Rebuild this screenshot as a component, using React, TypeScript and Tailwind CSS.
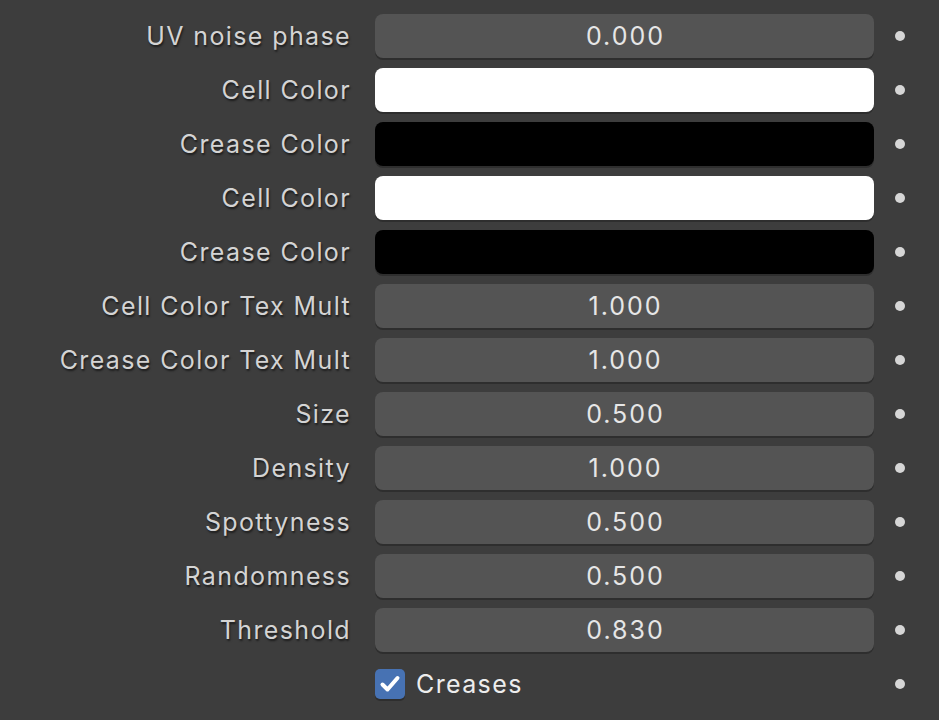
import React from "react";

type Row =
  | { label: string; kind: "num"; value: string }
  | { label: string; kind: "color"; color: string };

const rows: Row[] = [
  { label: "UV noise phase", kind: "num", value: "0.000" },
  { label: "Cell Color", kind: "color", color: "#ffffff" },
  { label: "Crease Color", kind: "color", color: "#000000" },
  { label: "Cell Color", kind: "color", color: "#ffffff" },
  { label: "Crease Color", kind: "color", color: "#000000" },
  { label: "Cell Color Tex Mult", kind: "num", value: "1.000" },
  { label: "Crease Color Tex Mult", kind: "num", value: "1.000" },
  { label: "Size", kind: "num", value: "0.500" },
  { label: "Density", kind: "num", value: "1.000" },
  { label: "Spottyness", kind: "num", value: "0.500" },
  { label: "Randomness", kind: "num", value: "0.500" },
  { label: "Threshold", kind: "num", value: "0.830" },
];

function Dot() {
  return (
    <div className="flex w-[52px] items-center justify-center">
      <div className="h-[10px] w-[10px] rounded-full bg-[#d6d6d6]" />
    </div>
  );
}

export default function App() {
  return (
    <div
      className="min-h-[720px] w-[939px] bg-[#3d3d3d] pt-[14px] text-[25px]"
      style={{ fontFamily: "Inter, 'Noto Sans', sans-serif" }}
    >
      <div className="flex flex-col gap-[10px]">
        {rows.map((r, i) => (
          <div key={i} className="flex h-[44px] items-center">
            <div className="w-[351px] pt-[2px] text-right tracking-[0.055em] text-[#d4d4d4] [text-shadow:1px_2px_2px_rgba(0,0,0,0.55)]">
              {r.label}
            </div>
            <div className="ml-[24px] h-[44px] w-[499px]">
              {r.kind === "num" ? (
                <div className="flex h-full items-center justify-center rounded-[8px] bg-[#545454] pt-[2px] pl-[2px] tracking-[0.08em] text-[#e6e6e6] shadow-[0_2px_0_#2e2e2e]">
                  {r.value}
                </div>
              ) : (
                <div
                  className="h-full rounded-[8px] shadow-[0_2px_0_#2e2e2e]"
                  style={{ backgroundColor: r.color }}
                />
              )}
            </div>
            <Dot />
          </div>
        ))}
        <div className="flex h-[44px] items-center">
          <div className="w-[351px]" />
          <div className="ml-[24px] flex w-[499px] items-center gap-[11px]">
            <div className="flex h-[30px] w-[30px] items-center justify-center rounded-[5px] bg-[#4772b3] shadow-[0_2px_0_#2e2e2e]">
              <svg width="22" height="22" viewBox="0 0 22 22">
                <path d="M3.5 11.5 L8.5 16.5 L18.5 5" fill="none" stroke="#ffffff" strokeWidth="4" strokeLinecap="round" strokeLinejoin="round" />
              </svg>
            </div>
            <span className="pt-[2px] tracking-[0.055em] text-[#ededed]">Creases</span>
          </div>
          <Dot />
        </div>
      </div>
    </div>
  );
}
